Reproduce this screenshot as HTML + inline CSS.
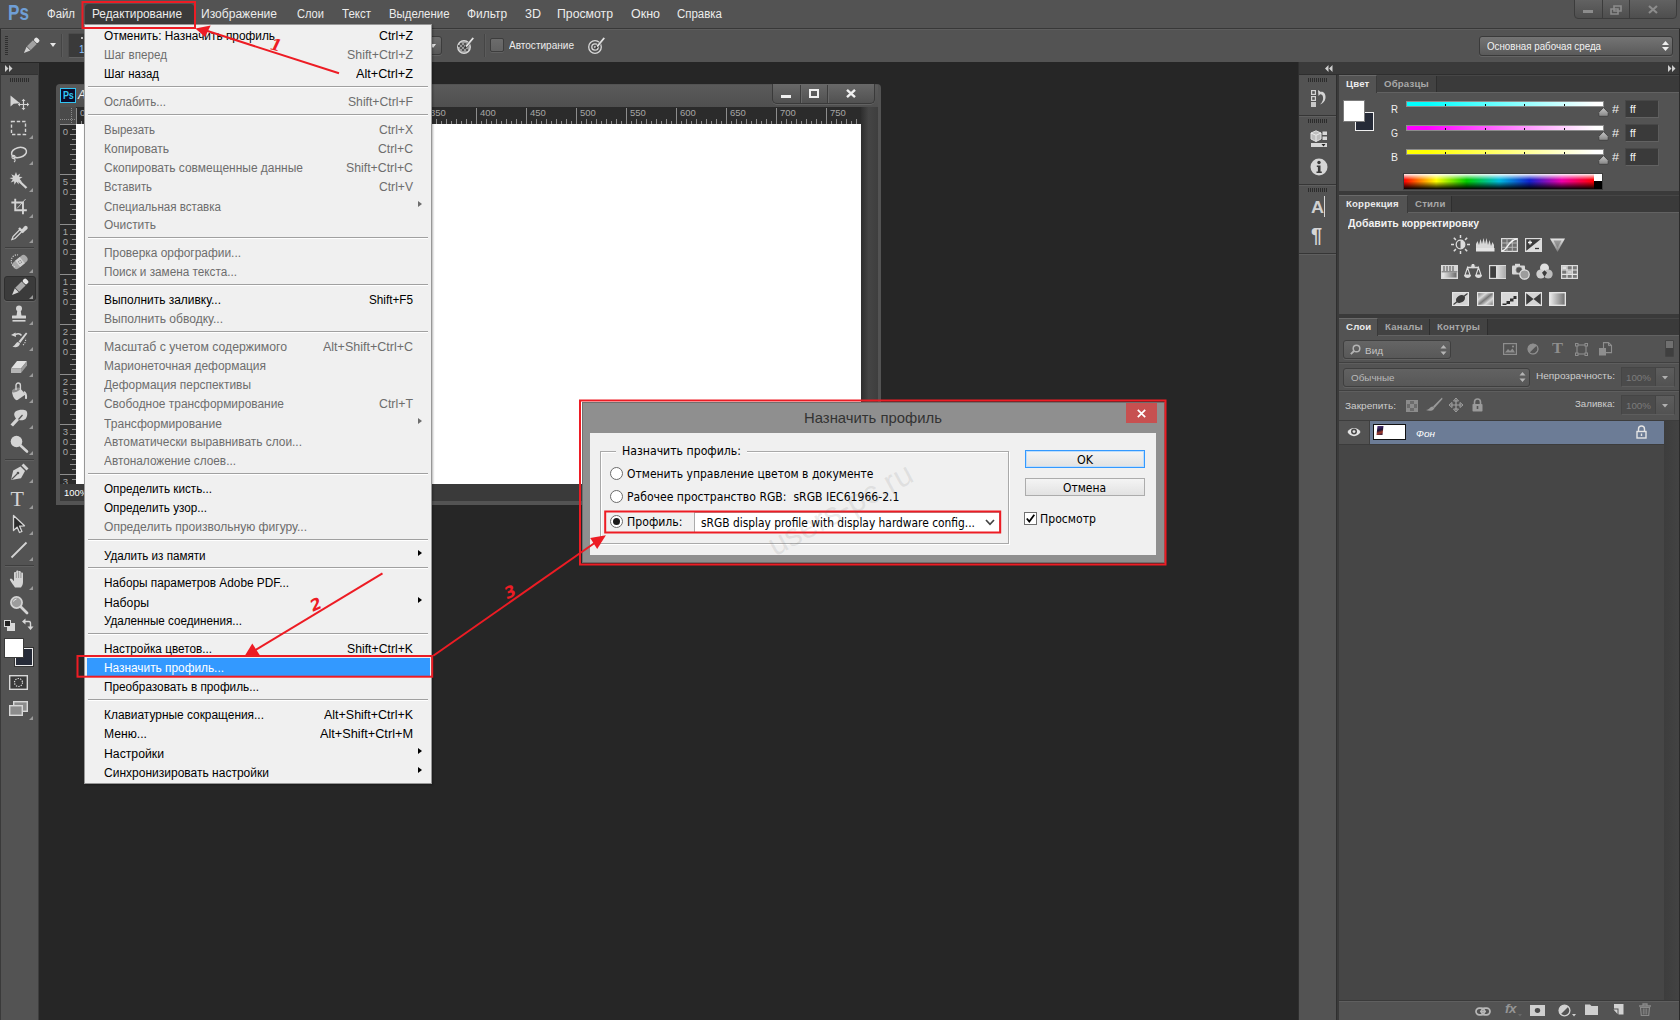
<!DOCTYPE html>
<html lang="ru"><head>
<meta charset="utf-8">
<title>Photoshop - Назначить профиль</title>
<style>
*{box-sizing:border-box;margin:0;padding:0}
html,body{width:1680px;height:1020px;overflow:hidden;background:#262626}
body{position:relative;font-family:"Liberation Sans",sans-serif;font-size:12px;color:#e6e6e6;-webkit-font-smoothing:antialiased}
.abs{position:absolute}
.t{position:absolute;white-space:nowrap;line-height:1}
svg{position:absolute;overflow:visible}
/* ===== top bars ===== */
#menubar{left:0;top:0;width:1680px;height:28px;background:#535353}
#menuline{left:0;top:28px;width:1680px;height:1px;background:#383838}
#menuline2{left:0;top:29px;width:1680px;height:1px;background:#5e5e5e}
#optbar{left:0;top:30px;width:1680px;height:32px;background:#535353}
.mb{position:absolute;top:8px;font-size:12px;line-height:12px;color:#ececec;white-space:nowrap;transform-origin:0 50%}
/* ===== toolbar ===== */
#toolbar{left:0;top:63px;width:39px;height:957px;background:#535353;border-left:1px solid #3a3a3a;border-right:1px solid #3d3d3d}
#toolhdr{left:1px;top:63px;width:37px;height:11px;background:#3a3a3a}
/* ===== doc window ===== */
#doc{left:56px;top:84px;width:825px;height:421px;background:#535353;border-radius:4px 4px 0 0}
#doctitle{left:60px;top:85px;width:818px;height:22px;background:linear-gradient(#5a5a5a,#4f4f4f)}
#hruler{left:76px;top:107px;width:785px;height:17px;background:#2b2b2b}
#vruler{left:60px;top:124px;width:16px;height:360px;background:#2b2b2b}
#rcorner{left:60px;top:107px;width:16px;height:17px;background:#4a4a4a}
#canvas{left:76px;top:124px;width:785px;height:360px;background:#fff}
#vscroll{left:861px;top:107px;width:17px;height:394px;background:linear-gradient(90deg,#2e2e2e,#454545 45%,#3e3e3e)}
#status{left:60px;top:484px;width:801px;height:17px;background:#3a3a3a}
.rl{position:absolute;font-size:9.5px;line-height:10px;color:#a6a6a6;white-space:nowrap}
/* ===== dropdown menu ===== */
#menu{left:84px;top:24px;width:348px;height:760px;background:#f0f0f0;border:1px solid #979797;box-shadow:1px 1px 2px rgba(0,0,0,.3)}
.mt{position:absolute;font-size:12px;line-height:19px;height:19px;white-space:nowrap;margin-top:1px}
.ms{position:absolute;left:88px;width:340px;height:2px;border-top:1px solid #a0a0a0;border-bottom:1px solid #fff}
.arr{position:absolute;left:418px;width:0;height:0;border-left:4.500px solid #000;border-top:3.700px solid transparent;border-bottom:3.700px solid transparent;margin-top:-1px}
/* ===== right dock ===== */
#dock{left:1298px;top:62px;width:382px;height:958px;background:#3a3a3a}
#iconcol{left:1299px;top:75px;width:37px;height:945px;background:#535353}
.panel{position:absolute;left:1339px;width:340px;background:#535353;border-top:1px solid #626262}
.tabbar{position:absolute;left:1339px;width:340px;height:17px;background:#3a3a3a;z-index:1;border-top:1px solid #464646}
.tab{position:absolute;top:0;height:16px;font-size:9.600px;letter-spacing:.2px;font-weight:bold;line-height:15px;color:#a8a8a8;border-right:1px solid #2e2e2e;background:#424242;padding-left:7px;white-space:nowrap}
.tab.a{background:#535353;color:#ececec;height:18px;top:-1px;border-right:1px solid #3a3a3a;border-top:1px solid #6a6a6a;line-height:16px}
.ps{font-size:10px;color:#dcdcdc}
/* ===== dialog ===== */
#dlg{left:582px;top:402px;width:583px;height:161px;background:#8f8f8f;border:1px solid #6f6f6f}
#dlgc{left:590px;top:433px;width:566px;height:122px;background:#f0f0f0}
.dt{position:absolute;white-space:nowrap;color:#000;font-family:"DejaVu Sans Condensed","DejaVu Sans","Liberation Sans",sans-serif;font-size:12px;line-height:14px;transform-origin:0 50%}
.radio{position:absolute;width:13px;height:13px;border-radius:50%;border:1px solid #6b6b6b;background:#fff}
.btn{position:absolute;left:1025px;width:120px;height:18px;border:1px solid #acacac;background:linear-gradient(#f4f4f4,#e2e2e2)}
</style>
</head>
<body>
<!-- ================= TOP BARS ================= -->
<div id="menubar" class="abs"></div>
<div id="menuline" class="abs"></div>
<div id="menuline2" class="abs"></div>
<div id="optbar" class="abs"></div>
<!--MENUBAR-ITEMS-->
<div class="abs" style="left:84.500px;top:4px;width:109px;height:20px;background:#3a3a3a;border-radius:3.500px 3.500px 0 0"></div>
<span class="t" style="left: 7.5px; top: 2.5px; font-size: 21.5px; font-weight: bold; color: rgb(111, 159, 214); transform: scaleX(0.7981); transform-origin: 0px 50%;">Ps</span>
<span class="mb" style="transform: scaleX(0.9487); left: 47px; transform-origin: 0px 50%;">Файл</span>
<span class="mb" style="transform: scaleX(0.9844); left: 92px; transform-origin: 0px 50%;">Редактирование</span>
<span class="mb" style="transform: scaleX(1.0054); left: 201px; transform-origin: 0px 50%;">Изображение</span>
<span class="mb" style="transform: scaleX(0.9251); left: 297px; transform-origin: 0px 50%;">Слои</span>
<span class="mb" style="transform: scaleX(0.9597); left: 342px; transform-origin: 0px 50%;">Текст</span>
<span class="mb" style="transform: scaleX(0.9514); left: 388.5px; transform-origin: 0px 50%;">Выделение</span>
<span class="mb" style="transform: scaleX(0.9922); left: 467px; transform-origin: 0px 50%;">Фильтр</span>
<span class="mb" style="transform: scaleX(1.0428); left: 525px; transform-origin: 0px 50%;">3D</span>
<span class="mb" style="transform: scaleX(1.0217); left: 557px; transform-origin: 0px 50%;">Просмотр</span>
<span class="mb" style="transform: scaleX(1.0398); left: 631px; transform-origin: 0px 50%;">Окно</span>
<span class="mb" style="transform: scaleX(0.9559); left: 677px; transform-origin: 0px 50%;">Справка</span>
<!--/MENUBAR-ITEMS-->
<!--OPTBAR-ITEMS-->
<div class="abs" style="left:0;top:29px;width:1px;height:991px;background:#2e2e2e"></div>
<!-- grip -->
<div class="abs" style="left:5px;top:36px;width:3px;height:20px;background:repeating-linear-gradient(#2f2f2f 0 1px,transparent 1px 2px)"></div>
<!-- pencil icon -->
<svg style="left:22px;top:37px" width="18" height="18" viewBox="0 0 18 18"><g transform="rotate(45 9 9)"><rect x="6.3" y="-1.2" width="5.4" height="4.2" rx="1.6" fill="#e4e4e4"></rect><rect x="6.3" y="3.6" width="5.4" height="8.4" fill="#a2a2a2"></rect><path d="M6.3 12.6h5.4L9 19z" fill="#d2d2d2"></path></g></svg>
<svg style="left:50px;top:43px" width="6" height="4" viewBox="0 0 6 4"><path d="M0 0h6L3 4z" fill="#e6e6e6"></path></svg>
<div class="abs" style="left:61px;top:34px;width:1px;height:23px;background:#454545"></div>
<div class="abs" style="left:62px;top:34px;width:1px;height:23px;background:#5b5b5b"></div>
<!-- brush preset -->
<div class="abs" style="left:68px;top:33px;width:358px;height:25px;background:#3a3a3a;border:1px solid #4b4b4b;border-bottom-color:#626262;border-radius:2px"></div>
<div class="abs" style="left:81px;top:37px;width:2px;height:2px;background:#e8e8e8;border-radius:1px"></div>
<span class="t" style="left:79px;top:45px;font-size:10px;color:#8cc4ff">13</span>
<div class="abs" style="left:425px;top:36px;width:17px;height:19px;background:linear-gradient(#6e6e6e,#585858);border:1px solid #3c3c3c;border-radius:0 3px 3px 0;box-shadow:0 1px 0 #626262"></div>
<svg style="left:430px;top:44px" width="6" height="4" viewBox="0 0 6 4"><path d="M0 0h6L3 4z" fill="#e6e6e6"></path></svg>
<!-- icon: brush with checker circle -->
<svg style="left:456px;top:35px" width="20" height="20" viewBox="0 0 20 20"><circle cx="8" cy="12" r="6.3" fill="#9a9a9a" stroke="#d8d8d8" stroke-width="1.3"></circle><path d="M4 8h2v2H4zM8 8h2v2H8zM6 10h2v2H6zM10 10h2v2h-2zM4 12h2v2H4zM8 12h2v2H8zM6 14h2v2H6zM10 14h2v2h-2zM2 10h2v2H2z" fill="#555"></path><path d="M9 11l7.5-9 1.8 1.5-7.5 9z" fill="#e0e0e0" stroke="#444" stroke-width=".6"></path><path d="M9 11l1.8 1.5-2.6 1.3z" fill="#333"></path></svg>
<div class="abs" style="left:484px;top:34px;width:1px;height:23px;background:#454545"></div>
<div class="abs" style="left:485px;top:34px;width:1px;height:23px;background:#5b5b5b"></div>
<div class="abs" style="left:490px;top:38px;width:14px;height:14px;background:linear-gradient(#6c6c6c,#626262);border:1px solid #3d3d3d;border-radius:2px;box-shadow:0 1px 0 #616161"></div>
<span class="t" style="top: 40px; font-size: 10.5px; color: rgb(236, 236, 236); transform: scaleX(0.9559); left: 509px; transform-origin: 0px 50%;">Автостирание</span>
<!-- icon: target with brush -->
<svg style="left:586px;top:35px" width="22" height="20" viewBox="0 0 22 20"><circle cx="9" cy="12" r="6.3" fill="none" stroke="#d8d8d8" stroke-width="1.3"></circle><circle cx="9" cy="12" r="3.2" fill="none" stroke="#d8d8d8" stroke-width="1.3"></circle><circle cx="9" cy="12" r="1" fill="#d8d8d8"></circle><path d="M10 11l7.5-9 1.8 1.5-7.5 9z" fill="#e0e0e0" stroke="#444" stroke-width=".6"></path><path d="M10 11l1.8 1.5-2.6 1.3z" fill="#333"></path></svg>
<!-- workspace dropdown -->
<div class="abs" style="left:1479px;top:36px;width:194px;height:20px;background:linear-gradient(#747474,#5a5a5a);border:1px solid #3a3a3a;border-radius:3px;box-shadow:0 1px 0 #646464"></div>
<span class="t" style="top: 41px; font-size: 10.5px; color: rgb(242, 242, 242); transform: scaleX(0.9286); left: 1487px; transform-origin: 0px 50%;">Основная рабочая среда</span>
<svg style="left:1662px;top:41px" width="7" height="10" viewBox="0 0 7 10"><path d="M3.5 0L7 4H0zM3.5 10L7 6H0z" fill="#eee"></path></svg>
<!-- window controls -->
<div class="abs" style="left:1574px;top:-3px;width:103px;height:22px;background:linear-gradient(#646464,#4e4e4e);border:1px solid #3c3c3c;border-radius:0 0 4px 4px"></div>
<div class="abs" style="left:1602px;top:0;width:1px;height:18px;background:#3c3c3c"></div>
<div class="abs" style="left:1629px;top:0;width:1px;height:18px;background:#3c3c3c"></div>
<div class="abs" style="left:1583px;top:10px;width:10px;height:3px;background:#8c8c8c"></div>
<svg style="left:1610px;top:5px" width="12" height="10" viewBox="0 0 12 10"><path d="M4 1h7v5h-7z M1 4h7v5h-7z" fill="none" stroke="#8c8c8c" stroke-width="1.6"></path></svg>
<svg style="left:1648px;top:5px" width="10" height="9" viewBox="0 0 10 9"><path d="M1 1l8 7M9 1l-8 7" stroke="#8c8c8c" stroke-width="2.2"></path></svg>
<!--/OPTBAR-ITEMS-->
<!-- ================= TOOLBAR ================= -->
<div id="toolbar" class="abs"></div>
<div id="toolhdr" class="abs"></div>
<!--TOOLS-->
<svg style="left:5px;top:65px" width="8" height="7" viewBox="0 0 8 7"><path d="M0 0l3.500 3.500L0 7zM4 0l3.500 3.500L4 7z" fill="#cfcfcf"></path></svg>
<div class="abs" style="left:1px;top:74px;width:37px;height:1px;background:#333"></div>
<div class="abs" style="left:10px;top:78px;width:19px;height:4px;background:repeating-linear-gradient(90deg,#2c2c2c 0 1px,transparent 1px 2px)"></div>
<div class="abs" style="left:5px;top:247px;width:29px;height:1px;background:#3e3e3e"></div><div class="abs" style="left:5px;top:248px;width:29px;height:1px;background:#5f5f5f"></div>
<div class="abs" style="left:5px;top:459px;width:29px;height:1px;background:#3e3e3e"></div><div class="abs" style="left:5px;top:460px;width:29px;height:1px;background:#5f5f5f"></div>
<div class="abs" style="left:5px;top:565px;width:29px;height:1px;background:#3e3e3e"></div><div class="abs" style="left:5px;top:566px;width:29px;height:1px;background:#5f5f5f"></div>
<div class="abs" style="left:4px;top:276px;width:32px;height:25px;background:#3b3b3b;border:1px solid #2f2f2f;border-radius:3px;box-shadow:0 1px 0 #626262"></div>
<svg style="left:9px;top:92px" width="20" height="20" viewBox="0 0 20 20"><path d="M1.500 3.500v11l3.200-2.700 6.300-.6z" fill="#d4d4d4"></path><path d="M14.500 8v9M10 12.500h9" stroke="#d4d4d4" stroke-width="1.200"></path><path d="M14.500 6.800l1.900 2.200h-3.800zM14.500 18.200l1.900-2.200h-3.800zM8.800 12.500l2.200-1.900v3.800zM20.200 12.500l-2.200-1.900v3.800z" fill="#d4d4d4"></path></svg>
<svg style="left:9px;top:118px" width="20" height="20" viewBox="0 0 20 20"><rect x="2.5" y="3.5" width="14" height="13" fill="none" stroke="#d4d4d4" stroke-width="1.4" stroke-dasharray="3.4 1.9"></rect></svg>
<svg style="left:29px;top:135px" width="4" height="4" viewBox="0 0 4 4"><path d="M4 0v4H0z" fill="#9a9a9a"></path></svg>
<svg style="left:9px;top:144px" width="20" height="20" viewBox="0 0 20 20"><ellipse cx="10" cy="8.5" rx="7.6" ry="5" fill="none" stroke="#d4d4d4" stroke-width="1.5" transform="rotate(-14 10 8.5)"></ellipse><circle cx="4.5" cy="13" r="1.6" fill="none" stroke="#d4d4d4" stroke-width="1.1"></circle><path d="M5 14.5c1.5 1 1.5 2.5 0 3.5" fill="none" stroke="#d4d4d4" stroke-width="1.1"></path></svg>
<svg style="left:29px;top:161px" width="4" height="4" viewBox="0 0 4 4"><path d="M4 0v4H0z" fill="#9a9a9a"></path></svg>
<svg style="left:9px;top:171px" width="20" height="20" viewBox="0 0 20 20"><path d="M7 1l1.2 3.4 3-2-1.2 3.3 3.6.3-3 2 2.4 2.7-3.5-.7.2 3.6-2.3-2.8-2 3-.3-3.6-3.4 1.2 2.1-2.9L.5 7l3.5-.6-1.700-3.200 3.200 1.600z" fill="#d4d4d4"></path><path d="M9.500 9.500l8 7.500" stroke="#d4d4d4" stroke-width="2.300"></path></svg>
<svg style="left:29px;top:188px" width="4" height="4" viewBox="0 0 4 4"><path d="M4 0v4H0z" fill="#9a9a9a"></path></svg>
<svg style="left:9px;top:197px" width="20" height="20" viewBox="0 0 20 20"><g transform="translate(1.500 0.800) scale(.86)"><path d="M5.500 1v13.500H19M1 5.500h13.500V19" fill="none" stroke="#d4d4d4" stroke-width="2.200"></path><path d="M7.500 12.500L17.500 1.500" stroke="#d4d4d4" stroke-width="1"></path></g></svg>
<svg style="left:29px;top:214px" width="4" height="4" viewBox="0 0 4 4"><path d="M4 0v4H0z" fill="#9a9a9a"></path></svg>
<svg style="left:9px;top:221.5px" width="20" height="20" viewBox="0 0 20 20"><path d="M3 17.500l1-3 7-7 2 2-7 7z" fill="none" stroke="#d4d4d4" stroke-width="1.300"></path><path d="M10 6l4.500 4.500" stroke="#d4d4d4" stroke-width="2.400"></path><path d="M12.300 8l3-3.500a1.900 1.900 0 012.800 2.800l-3.500 3z" fill="#d4d4d4"></path><path d="M2.500 18l1.500-.8-.7-.7z" fill="#d4d4d4"></path></svg>
<svg style="left:29px;top:238.5px" width="4" height="4" viewBox="0 0 4 4"><path d="M4 0v4H0z" fill="#9a9a9a"></path></svg>
<svg style="left:9px;top:252px" width="20" height="20" viewBox="0 0 20 20"><g transform="rotate(-40 11 10)"><rect x="2.500" y="6" width="17" height="8" rx="3.800" fill="#a9a9a9"></rect><rect x="8" y="6" width="6" height="8" fill="#cfcfcf"></rect><path d="M9.500 8.500h1v1h-1zM11.500 8.500h1v1h-1zM9.500 10.500h1v1h-1zM11.500 10.500h1v1h-1z" fill="#666"></path></g><path d="M6 15c-4-2-5-7-2-10.500 1.500-1.500 3.500-2 5-1.500" fill="none" stroke="#d4d4d4" stroke-width="1.100" stroke-dasharray="1.200 1.200"></path></svg>
<svg style="left:29px;top:269px" width="4" height="4" viewBox="0 0 4 4"><path d="M4 0v4H0z" fill="#9a9a9a"></path></svg>
<svg style="left:9px;top:278px" width="20" height="20" viewBox="0 0 20 20"><g transform="rotate(45 10 10)"><rect x="7.200" y="-1.500" width="5.600" height="4.400" rx="1.600" fill="#e6e6e6"></rect><rect x="7.200" y="3.500" width="5.600" height="9" fill="#a8a8a8"></rect><path d="M7.200 13.100h5.600L10 19.800z" fill="#d6d6d6"></path></g></svg>
<svg style="left:29px;top:295px" width="4" height="4" viewBox="0 0 4 4"><path d="M4 0v4H0z" fill="#9a9a9a"></path></svg>
<svg style="left:9px;top:304px" width="20" height="20" viewBox="0 0 20 20"><circle cx="10" cy="4.500" r="3" fill="#d4d4d4"></circle><path d="M8.300 6.500h3.400l.8 5.500h-5z" fill="#d4d4d4"></path><rect x="3" y="11.500" width="14" height="3" rx=".5" fill="#d4d4d4"></rect><rect x="3.500" y="16" width="13" height="1.600" fill="#d4d4d4"></rect></svg>
<svg style="left:29px;top:321px" width="4" height="4" viewBox="0 0 4 4"><path d="M4 0v4H0z" fill="#9a9a9a"></path></svg>
<svg style="left:9px;top:330px" width="20" height="20" viewBox="0 0 20 20"><path d="M17 2.500l-7.500 9 1.800 1.500 7-9.500z" fill="#d4d4d4"></path><path d="M9 12c-2.500.5-2.500 3.500-5.500 4.500 3 1.500 7 .500 7.500-3z" fill="#d4d4d4"></path><path d="M5 5.500c3-2.500 6-2 7.500 0" fill="none" stroke="#d4d4d4" stroke-width="1.500"></path><path d="M2 5l4.500-2.500.5 4.500z" fill="#d4d4d4"></path><path d="M14 15c2-1.500 3-4 2.500-6.500" fill="none" stroke="#d4d4d4" stroke-width="1.100" stroke-dasharray="1.200 1.200"></path></svg>
<svg style="left:29px;top:347px" width="4" height="4" viewBox="0 0 4 4"><path d="M4 0v4H0z" fill="#9a9a9a"></path></svg>
<svg style="left:9px;top:356px" width="20" height="20" viewBox="0 0 20 20"><path d="M2 12.500l6-7.500h10l-6 7.500z" fill="#e2e2e2"></path><path d="M2 12.500h10v4.500H2z" fill="#b4b4b4"></path><path d="M12 12.500l6-7.500v4.500l-6 7.500z" fill="#9a9a9a"></path></svg>
<svg style="left:29px;top:373px" width="4" height="4" viewBox="0 0 4 4"><path d="M4 0v4H0z" fill="#9a9a9a"></path></svg>
<svg style="left:9px;top:382px" width="20" height="20" viewBox="0 0 20 20"><path d="M3 9.500l8-3.500 5.500 6.500-8 5.500c-2 1-5-3-5.500-8.500z" fill="#d4d4d4"></path><ellipse cx="7" cy="8" rx="4.300" ry="1.900" transform="rotate(-23 7 8)" fill="#8a8a8a"></ellipse><path d="M7 8V3.200a2.200 2.200 0 014.400 0V7" fill="none" stroke="#d4d4d4" stroke-width="1.400"></path><path d="M15 9c2.500 1 3.500 4 3 7.500-.8 1.200-2.200.5-2-1 .3-2-.2-4-1.500-5z" fill="#d4d4d4"></path></svg>
<svg style="left:29px;top:399px" width="4" height="4" viewBox="0 0 4 4"><path d="M4 0v4H0z" fill="#9a9a9a"></path></svg>
<svg style="left:9px;top:408px" width="20" height="20" viewBox="0 0 20 20"><path d="M6.500 3.500c2.500-2 8-2.500 10.500-1 2 1.500 1.500 6.500-.5 8.500-2 1.500-4.500 1.500-6.500 1l-6 6.500-2.500-2 5.500-6c-2-2.500-2.500-5.500-.5-7z" fill="#d4d4d4"></path><path d="M9.500 11.500l4-4.500" stroke="#535353" stroke-width="1.200"></path></svg>
<svg style="left:29px;top:425px" width="4" height="4" viewBox="0 0 4 4"><path d="M4 0v4H0z" fill="#9a9a9a"></path></svg>
<svg style="left:9px;top:434px" width="20" height="20" viewBox="0 0 20 20"><circle cx="7.500" cy="7.500" r="5.800" fill="#d4d4d4"></circle><path d="M11.500 11.500l6.500 6" stroke="#d4d4d4" stroke-width="2.600" stroke-linecap="round"></path></svg>
<svg style="left:29px;top:451px" width="4" height="4" viewBox="0 0 4 4"><path d="M4 0v4H0z" fill="#9a9a9a"></path></svg>
<svg style="left:9px;top:462px" width="20" height="20" viewBox="0 0 20 20"><path d="M2 18l2.200-9.500 7.300-4 4.500 4.500-4 7.300z" fill="#d4d4d4"></path><path d="M2.500 17.500l6-6" stroke="#535353" stroke-width="1.100"></path><circle cx="9" cy="11" r="1.300" fill="#535353"></circle><path d="M12.500 3.500l2-2 5 5-2 2z" fill="#d4d4d4"></path></svg>
<svg style="left:29px;top:479px" width="4" height="4" viewBox="0 0 4 4"><path d="M4 0v4H0z" fill="#9a9a9a"></path></svg>
<span class="t" style="left:10.5px;top:488px;font-family:'Liberation Serif',serif;font-size:22px;color:#d4d4d4">T</span>
<svg style="left:29px;top:505px" width="4" height="4" viewBox="0 0 4 4"><path d="M4 0v4H0z" fill="#9a9a9a"></path></svg>
<svg style="left:9px;top:514px" width="20" height="20" viewBox="0 0 20 20"><path d="M4.500 1.500v15l3.600-3.400 2.400 5.400 2.400-1.100-2.400-5.300 5-.3z" fill="#2b2b2b" stroke="#d4d4d4" stroke-width="1.300" stroke-linejoin="round"></path></svg>
<svg style="left:29px;top:531px" width="4" height="4" viewBox="0 0 4 4"><path d="M4 0v4H0z" fill="#9a9a9a"></path></svg>
<svg style="left:9px;top:540px" width="20" height="20" viewBox="0 0 20 20"><path d="M2.500 17.500L17.500 2.500" stroke="#d4d4d4" stroke-width="1.800"></path></svg>
<svg style="left:29px;top:557px" width="4" height="4" viewBox="0 0 4 4"><path d="M4 0v4H0z" fill="#9a9a9a"></path></svg>
<svg style="left:9px;top:569px" width="20" height="20" viewBox="0 0 20 20"><path d="M6 18.500c-1.500-2-3.500-5-5-7.500-.6-1.200 1-2.200 2-1l2 2.300V4c0-1.500 2.200-1.500 2.200 0V2.500c0-1.500 2.300-1.500 2.300 0V3c0-1.500 2.300-1.500 2.300 0v1.500c0-1.400 2.200-1.400 2.200 0V13c0 2.500-1 4-2 5.500z" fill="#d4d4d4"></path><path d="M7.300 4v5M9.600 3v6M11.900 4v5" stroke="#7a7a7a" stroke-width=".7"></path></svg>
<svg style="left:29px;top:586px" width="4" height="4" viewBox="0 0 4 4"><path d="M4 0v4H0z" fill="#9a9a9a"></path></svg>
<svg style="left:9px;top:595px" width="20" height="20" viewBox="0 0 20 20"><circle cx="7.500" cy="7.500" r="5.600" fill="#9c9c9c" stroke="#d4d4d4" stroke-width="1.700"></circle><path d="M12 12l6 6" stroke="#d4d4d4" stroke-width="2.800" stroke-linecap="round"></path><path d="M4.500 6.500a3.500 3.500 0 013-2.500" stroke="#e8e8e8" stroke-width="1" fill="none"></path></svg>
<svg style="left:4px;top:620px" width="11" height="11" viewBox="0 0 11 11"><rect x="3.500" y="3.500" width="7" height="7" fill="#d8d8d8" stroke="#d8d8d8"></rect><rect x=".5" y=".5" width="6" height="6" fill="#222" stroke="#d8d8d8"></rect></svg>
<svg style="left:22px;top:618px" width="11" height="12" viewBox="0 0 11 12"><path d="M2.500 3.500h4.500c1.500 0 1.500 1 1.500 2V9" fill="none" stroke="#d8d8d8" stroke-width="1.400"></path><path d="M0 3.500L3.500.5v6zM8.500 12L5.500 8.500h6z" fill="#d8d8d8"></path></svg>
<div class="abs" style="left:15px;top:648px;width:18px;height:18px;background:#262b38;border:1px solid #ececec;outline:1px solid #333"></div>
<div class="abs" style="left:5px;top:639px;width:18px;height:18px;background:#fff;outline:1px solid #3a3a3a"></div>
<svg style="left:9px;top:675px" width="19" height="15" viewBox="0 0 19 15"><rect x=".7" y=".7" width="17.600" height="13.600" fill="#3a3a3a" stroke="#d8d8d8" stroke-width="1.400"></rect><circle cx="9.500" cy="7.500" r="4" fill="none" stroke="#e0e0e0" stroke-width="1.200" stroke-dasharray="1.300 1.200"></circle></svg>
<svg style="left:9px;top:701px" width="19" height="16" viewBox="0 0 19 16"><rect x="4.700" y=".7" width="13.600" height="9.600" fill="#8c8c8c" stroke="#d8d8d8" stroke-width="1.400"></rect><rect x=".7" y="4.700" width="12.600" height="9.600" fill="#8c8c8c" stroke="#d8d8d8" stroke-width="1.400"></rect></svg>
<svg style="left:29px;top:716px" width="4" height="4" viewBox="0 0 4 4"><path d="M4 0v4H0z" fill="#9a9a9a"></path></svg>
<!--/TOOLS-->
<!-- ================= DOC WINDOW ================= -->
<div id="doc" class="abs"></div>
<div id="doctitle" class="abs"></div>
<div id="hruler" class="abs"></div>
<div id="vruler" class="abs"></div>
<div id="rcorner" class="abs"></div>
<div id="canvas" class="abs"></div>
<div id="vscroll" class="abs"></div>
<div id="status" class="abs"></div>
<!--DOC-ITEMS-->
<div class="abs" style="left:60px;top:88px;width:16px;height:15px;background:#0b0b2a;border:1px solid #31c5f4"></div>
<span class="t" style="top: 90px; font-size: 10.5px; font-weight: bold; color: rgb(49, 197, 244); letter-spacing: -0.3px; transform: scaleX(0.8571); left: 63px; transform-origin: 0px 50%;">Ps</span>
<span class="t" style="left:78px;top:89px;font-size:12px;color:#f0f0f0;font-style:italic">Adobe</span>
<div class="abs" style="left:772px;top:84px;width:103px;height:20px;background:linear-gradient(#686868,#515151);border:1px solid #3a3a3a;border-top:none;border-radius:0 0 5px 5px;box-shadow:0 1px 0 #626262"></div>
<div class="abs" style="left:800px;top:85px;width:1px;height:18px;background:#3d3d3d"></div><div class="abs" style="left:801px;top:85px;width:1px;height:18px;background:#686868"></div>
<div class="abs" style="left:827px;top:85px;width:1px;height:18px;background:#3d3d3d"></div><div class="abs" style="left:828px;top:85px;width:1px;height:18px;background:#686868"></div>
<div class="abs" style="left:781px;top:95px;width:10px;height:3px;background:#f0f0f0"></div>
<div class="abs" style="left:809px;top:89px;width:10px;height:9px;border:2px solid #f0f0f0;border-top-width:2px"></div>
<svg style="left:846px;top:89px" width="10" height="9" viewBox="0 0 10 9"><path d="M1 .8l8 7.400M9 .8l-8 7.400" stroke="#f0f0f0" stroke-width="2.400"></path></svg>
<div class="abs" style="left:76px;top:121px;width:785px;height:3px;background:repeating-linear-gradient(90deg,#8d8d8d 0 1px,transparent 1px 5px)"></div>
<div class="abs" style="left:76px;top:119px;width:785px;height:5px;background:repeating-linear-gradient(90deg,#8d8d8d 0 1px,transparent 1px 10px)"></div>
<div class="abs" style="left:76px;top:108px;width:785px;height:16px;background:repeating-linear-gradient(90deg,#8d8d8d 0 1px,transparent 1px 50px)"></div>
<span class="rl" style="left:80px;top:108px">0</span>
<span class="rl" style="left:130px;top:108px">50</span>
<span class="rl" style="left:180px;top:108px">100</span>
<span class="rl" style="left:230px;top:108px">150</span>
<span class="rl" style="left:280px;top:108px">200</span>
<span class="rl" style="left:330px;top:108px">250</span>
<span class="rl" style="left:380px;top:108px">300</span>
<span class="rl" style="left:430px;top:108px">350</span>
<span class="rl" style="left:480px;top:108px">400</span>
<span class="rl" style="left:530px;top:108px">450</span>
<span class="rl" style="left:580px;top:108px">500</span>
<span class="rl" style="left:630px;top:108px">550</span>
<span class="rl" style="left:680px;top:108px">600</span>
<span class="rl" style="left:730px;top:108px">650</span>
<span class="rl" style="left:780px;top:108px">700</span>
<span class="rl" style="left:830px;top:108px">750</span>
<div class="abs" style="left:72px;top:124px;width:4px;height:360px;background:repeating-linear-gradient(#8d8d8d 0 1px,transparent 1px 5px)"></div>
<div class="abs" style="left:70px;top:124px;width:6px;height:360px;background:repeating-linear-gradient(#8d8d8d 0 1px,transparent 1px 10px)"></div>
<div class="abs" style="left:60px;top:124px;width:16px;height:360px;background:repeating-linear-gradient(#8d8d8d 0 1px,transparent 1px 50px)"></div>
<span class="rl" style="left:62px;top:127px;line-height:10px;width:7px;text-align:center;white-space:normal;overflow:hidden;height:40px">0</span>
<span class="rl" style="left:62px;top:177px;line-height:10px;width:7px;text-align:center;white-space:normal;overflow:hidden;height:40px">5<br>0</span>
<span class="rl" style="left:62px;top:227px;line-height:10px;width:7px;text-align:center;white-space:normal;overflow:hidden;height:40px">1<br>0<br>0</span>
<span class="rl" style="left:62px;top:277px;line-height:10px;width:7px;text-align:center;white-space:normal;overflow:hidden;height:40px">1<br>5<br>0</span>
<span class="rl" style="left:62px;top:327px;line-height:10px;width:7px;text-align:center;white-space:normal;overflow:hidden;height:40px">2<br>0<br>0</span>
<span class="rl" style="left:62px;top:377px;line-height:10px;width:7px;text-align:center;white-space:normal;overflow:hidden;height:40px">2<br>5<br>0</span>
<span class="rl" style="left:62px;top:427px;line-height:10px;width:7px;text-align:center;white-space:normal;overflow:hidden;height:40px">3<br>0<br>0</span>
<span class="rl" style="left:62px;top:477px;line-height:10px;width:7px;text-align:center;white-space:normal;overflow:hidden;height:7px">3<br>5<br>0</span>
<div class="abs" style="left:60px;top:119px;width:16px;height:1px;background:repeating-linear-gradient(90deg,#8a8a8a 0 1px,transparent 1px 2px)"></div>
<div class="abs" style="left:71px;top:108px;width:1px;height:16px;background:repeating-linear-gradient(#8a8a8a 0 1px,transparent 1px 2px)"></div>
<span class="t" style="left: 64px; top: 488px; font-size: 9.5px; color: rgb(255, 255, 255); transform: scaleX(0.9871); transform-origin: 0px 50%;">100%</span>
<!--/DOC-ITEMS-->
<!-- ================= RIGHT DOCK ================= -->
<div id="dock" class="abs"></div>
<div id="iconcol" class="abs"></div>
<!--DOCK-ITEMS-->
<div class="abs" style="left:1298px;top:62px;width:1px;height:958px;background:#2f2f2f"></div>
<div class="abs" style="left:1299px;top:74px;width:381px;height:1px;background:#2e2e2e"></div>
<svg style="left:1325px;top:65px" width="8" height="7" viewBox="0 0 8 7"><path d="M3.500 0L0 3.500 3.500 7zM7.500 0L4 3.500 7.500 7z" fill="#cfcfcf"></path></svg>
<svg style="left:1668px;top:65px" width="8" height="7" viewBox="0 0 8 7"><path d="M0 0l3.500 3.500L0 7zM4 0l3.500 3.500L4 7z" fill="#cfcfcf"></path></svg>
<!-- icon column groups -->
<div class="abs" style="left:1308px;top:78px;width:19px;height:4px;background:repeating-linear-gradient(90deg,#2c2c2c 0 1px,transparent 1px 2px)"></div>
<svg style="left:1310px;top:89px" width="18" height="19" viewBox="0 0 18 19"><rect x="1.600" y="1.600" width="3.800" height="3.800" fill="none" stroke="#d4d4d4" stroke-width="1.200"></rect><rect x="1.600" y="7.600" width="3.800" height="3.800" fill="none" stroke="#d4d4d4" stroke-width="1.200"></rect><rect x="1" y="13" width="5" height="5" fill="#c8c8c8"></rect><path d="M9 3.500c4-2 7 1 6.500 5.500-.3 3-2.500 5.500-5.500 6.500 2.500-2.500 3.500-5 3-7.500-.3-2-1.800-3-3.500-2.500z" fill="#d4d4d4"></path><path d="M8 1l3.500 2.500L8.500 7z" fill="#d4d4d4"></path></svg>
<div class="abs" style="left:1299px;top:115px;width:37px;height:1px;background:#363636"></div>
<div class="abs" style="left:1299px;top:116px;width:37px;height:1px;background:#5f5f5f"></div>
<div class="abs" style="left:1308px;top:119px;width:19px;height:4px;background:repeating-linear-gradient(90deg,#2c2c2c 0 1px,transparent 1px 2px)"></div>
<svg style="left:1310px;top:130px" width="18" height="18" viewBox="0 0 18 18"><path d="M6 .8l5 2.200v6L6 11.500 1 9V3z" fill="#bdbdbd" stroke="#e2e2e2" stroke-width="1"></path><path d="M1 3l5 2.300 5-2.300M6 5.300v6" fill="none" stroke="#f0f0f0" stroke-width=".9"></path><rect x="12.500" y="1.500" width="4.500" height="3.500" fill="#d8d8d8"></rect><rect x="12.500" y="6.500" width="4.500" height="3.500" fill="#d8d8d8"></rect><rect x="1" y="13" width="16" height="4" fill="#d8d8d8"></rect><path d="M11.500 14l4 0-2 2.400z" fill="#222"></path></svg>
<svg style="left:1310px;top:158px" width="18" height="18" viewBox="0 0 18 18"><circle cx="9" cy="9" r="8.500" fill="#d6d6d6"></circle><circle cx="9" cy="4.500" r="1.700" fill="#3a3a3a"></circle><path d="M6.800 7.500h3.700v6h1.300v1.600H6.500v-1.600h1.400V9H6.800z" fill="#3a3a3a"></path></svg>
<div class="abs" style="left:1299px;top:184px;width:37px;height:1px;background:#363636"></div>
<div class="abs" style="left:1299px;top:185px;width:37px;height:1px;background:#5f5f5f"></div>
<div class="abs" style="left:1308px;top:188px;width:19px;height:4px;background:repeating-linear-gradient(90deg,#2c2c2c 0 1px,transparent 1px 2px)"></div>
<span class="t" style="left: 1310.5px; top: 199px; font-size: 17px; font-weight: bold; color: rgb(208, 208, 208); transform: scaleX(1.0585); transform-origin: 0px 50%;">A</span>
<div class="abs" style="left:1324px;top:196px;width:1px;height:21px;background:#d6d6d6"></div>
<span class="t" style="left:1311px;top:225px;font-size:20px;font-weight:bold;color:#d6d6d6">¶</span>
<div class="abs" style="left:1299px;top:253px;width:37px;height:1px;background:#363636"></div>
<div class="abs" style="left:1299px;top:254px;width:37px;height:1px;background:#5f5f5f"></div>
<div class="abs" style="left:1336px;top:75px;width:1px;height:945px;background:#2f2f2f"></div>
<!-- ===== COLOR PANEL ===== -->
<div class="tabbar" style="top:75px"><div class="tab a" style="left:0;width:38px">Цвет</div><div class="tab" style="left:38px;width:60px">Образцы</div></div>
<div class="panel" style="top:92px;height:99px"></div>
<svg style="left:1661px;top:80px" width="15" height="8" viewBox="0 0 15 8"><path d="M0 1.500h5L2.500 4.500z" fill="#c8c8c8"></path><path d="M6.500 .5H15M6.500 2.800H15M6.500 5.100H15M6.500 7.400H15" stroke="#c8c8c8" stroke-width="1.100"></path></svg>
<div class="abs" style="left:1355px;top:112px;width:19px;height:19px;background:#262b38;border:1px solid #f0f0f0"></div>
<div class="abs" style="left:1343px;top:100px;width:22px;height:22px;background:#fff;border:1px solid #7c7c7c"></div>
<span class="t" style="left: 1391px; top: 104px; font-size: 10.5px; color: rgb(240, 240, 240); transform: scaleX(0.9218); transform-origin: 0px 50%;">R</span>
<div class="abs" style="left:1406px;top:101px;width:198px;height:6px;background:#8d8d8d"></div>
<div class="abs" style="left:1407px;top:102px;width:196px;height:4px;background:linear-gradient(90deg,#00ffff 0,#00ffff 10%,#fff 96%)"></div>
<div class="abs" style="left:1445.0px;top:104px;width:1px;height:2px;background:#111"></div>
<div class="abs" style="left:1484.5px;top:104px;width:1px;height:2px;background:#111"></div>
<div class="abs" style="left:1524.0px;top:104px;width:1px;height:2px;background:#111"></div>
<div class="abs" style="left:1563.5px;top:104px;width:1px;height:2px;background:#111"></div>
<svg style="left:1598px;top:107px" width="11" height="10" viewBox="0 0 11 10"><defs><linearGradient id="thR" x1="0" y1="0" x2="0" y2="1"><stop offset="0" stop-color="#c8c8c8"></stop><stop offset="1" stop-color="#858585"></stop></linearGradient></defs><path d="M5.500 .6l4.700 4.700v3a1 1 0 01-1 1h-7.400a1 1 0 01-1-1v-3z" fill="url(#thR)" stroke="#404040" stroke-width=".9"></path></svg>
<span class="t" style="left: 1612px; top: 104px; font-size: 10.5px; color: rgb(240, 240, 240); transform: scaleX(1.1979); transform-origin: 0px 50%;">#</span>
<div class="abs" style="left:1625px;top:100px;width:34px;height:18px;background:#3a3a3a;border:1px solid #474747;border-bottom-color:#626262;border-right-color:#5c5c5c"></div>
<span class="t" style="left:1630px;top:104px;font-size:10.500px;color:#f4f4f4">ff</span>
<span class="t" style="left: 1391px; top: 128px; font-size: 10.5px; color: rgb(240, 240, 240); transform: scaleX(0.8566); transform-origin: 0px 50%;">G</span>
<div class="abs" style="left:1406px;top:125px;width:198px;height:6px;background:#8d8d8d"></div>
<div class="abs" style="left:1407px;top:126px;width:196px;height:4px;background:linear-gradient(90deg,#ff00ff 0,#ff00ff 10%,#fff 96%)"></div>
<div class="abs" style="left:1445.0px;top:128px;width:1px;height:2px;background:#111"></div>
<div class="abs" style="left:1484.5px;top:128px;width:1px;height:2px;background:#111"></div>
<div class="abs" style="left:1524.0px;top:128px;width:1px;height:2px;background:#111"></div>
<div class="abs" style="left:1563.5px;top:128px;width:1px;height:2px;background:#111"></div>
<svg style="left:1598px;top:131px" width="11" height="10" viewBox="0 0 11 10"><defs><linearGradient id="thG" x1="0" y1="0" x2="0" y2="1"><stop offset="0" stop-color="#c8c8c8"></stop><stop offset="1" stop-color="#858585"></stop></linearGradient></defs><path d="M5.500 .6l4.700 4.700v3a1 1 0 01-1 1h-7.400a1 1 0 01-1-1v-3z" fill="url(#thG)" stroke="#404040" stroke-width=".9"></path></svg>
<span class="t" style="left: 1612px; top: 128px; font-size: 10.5px; color: rgb(240, 240, 240); transform: scaleX(1.1979); transform-origin: 0px 50%;">#</span>
<div class="abs" style="left:1625px;top:124px;width:34px;height:18px;background:#3a3a3a;border:1px solid #474747;border-bottom-color:#626262;border-right-color:#5c5c5c"></div>
<span class="t" style="left:1630px;top:128px;font-size:10.500px;color:#f4f4f4">ff</span>
<span class="t" style="left: 1391px; top: 152px; font-size: 10.5px; color: rgb(240, 240, 240); transform: scaleX(0.9978); transform-origin: 0px 50%;">B</span>
<div class="abs" style="left:1406px;top:149px;width:198px;height:6px;background:#8d8d8d"></div>
<div class="abs" style="left:1407px;top:150px;width:196px;height:4px;background:linear-gradient(90deg,#ffff00 0,#ffff00 10%,#fff 96%)"></div>
<div class="abs" style="left:1445.0px;top:152px;width:1px;height:2px;background:#111"></div>
<div class="abs" style="left:1484.5px;top:152px;width:1px;height:2px;background:#111"></div>
<div class="abs" style="left:1524.0px;top:152px;width:1px;height:2px;background:#111"></div>
<div class="abs" style="left:1563.5px;top:152px;width:1px;height:2px;background:#111"></div>
<svg style="left:1598px;top:155px" width="11" height="10" viewBox="0 0 11 10"><defs><linearGradient id="thB" x1="0" y1="0" x2="0" y2="1"><stop offset="0" stop-color="#c8c8c8"></stop><stop offset="1" stop-color="#858585"></stop></linearGradient></defs><path d="M5.500 .6l4.700 4.700v3a1 1 0 01-1 1h-7.400a1 1 0 01-1-1v-3z" fill="url(#thB)" stroke="#404040" stroke-width=".9"></path></svg>
<span class="t" style="left: 1612px; top: 152px; font-size: 10.5px; color: rgb(240, 240, 240); transform: scaleX(1.1979); transform-origin: 0px 50%;">#</span>
<div class="abs" style="left:1625px;top:148px;width:34px;height:18px;background:#3a3a3a;border:1px solid #474747;border-bottom-color:#626262;border-right-color:#5c5c5c"></div>
<span class="t" style="left:1630px;top:152px;font-size:10.500px;color:#f4f4f4">ff</span>
<div class="abs" style="left:1403px;top:173px;width:200px;height:17px;background:#3c3c3c"></div>
<div class="abs" style="left:1404px;top:174px;width:190px;height:15px;background:linear-gradient(rgba(255,255,255,.95) 0,rgba(255,255,255,0) 38%,rgba(0,0,0,0) 50%,rgba(0,0,0,.97) 100%),linear-gradient(90deg,#f00 0,#ff0 17%,#0c0 33%,#0bd 50%,#12c 66%,#e0a 83%,#f00 100%)"></div>
<div class="abs" style="left:1594px;top:174px;width:8px;height:7px;background:#fff"></div><div class="abs" style="left:1594px;top:181px;width:8px;height:8px;background:#000"></div>
<!-- ===== ADJUSTMENTS PANEL ===== -->
<div class="tabbar" style="top:195px"><div class="tab a" style="left:0;width:69px">Коррекция</div><div class="tab" style="left:69px;width:44px">Стили</div></div>
<div class="panel" style="top:212px;height:102px"></div>
<svg style="left:1661px;top:200px" width="15" height="8" viewBox="0 0 15 8"><path d="M0 1.500h5L2.500 4.500z" fill="#c8c8c8"></path><path d="M6.500 .5H15M6.500 2.800H15M6.500 5.100H15M6.500 7.400H15" stroke="#c8c8c8" stroke-width="1.100"></path></svg>
<span class="t" style="top: 219px; font-size: 10px; font-weight: bold; color: rgb(242, 242, 242); transform: scaleX(1.0484); left: 1348px; transform-origin: 0px 50%;">Добавить корректировку</span>
<!-- row 1 -->
<svg style="left:1451px;top:235px" width="19" height="19" viewBox="0 0 19 19"><circle cx="9.500" cy="9.500" r="4.300" fill="#535353" stroke="#dcdcdc" stroke-width="1.300"></circle><path d="M9.500 5.200a4.300 4.300 0 010 8.600z" fill="#dcdcdc"></path><path d="M9.500 0v3M9.500 16v3M0 9.500h3M16 9.500h3M2.800 2.800l2.100 2.100M14.100 14.100l2.100 2.100M2.800 16.200l2.100-2.100M14.100 4.900l2.100-2.100" stroke="#dcdcdc" stroke-width="1.500"></path></svg>
<svg style="left:1476px;top:237px" width="19" height="15" viewBox="0 0 19 15"><path d="M0 14V7l1.500-3 1.500 4 1.500-6 1.500 5L7.500 1 9 7l1.500-6L12 8l1.500-5L15 9l1.500-4 1.500 3v6z" fill="#d8d8d8"></path><rect x="0" y="11" width="18.500" height="3.500" fill="#e4e4e4"></rect></svg>
<svg style="left:1501px;top:238px" width="17" height="14" viewBox="0 0 17 14"><rect x=".6" y=".6" width="15.800" height="12.800" fill="#6e6e6e" stroke="#dcdcdc" stroke-width="1.200"></rect><path d="M.6 5h15.800M.6 9.300h15.800M6 .6v12.800M11.300 .6v12.800" stroke="#bcbcbc" stroke-width=".9"></path><path d="M1 13c6-1 6-11 15-12" fill="none" stroke="#f4f4f4" stroke-width="1.400"></path></svg>
<svg style="left:1525px;top:238px" width="17" height="14" viewBox="0 0 17 14"><rect x=".6" y=".6" width="15.800" height="12.800" fill="#3c3c3c" stroke="#dcdcdc" stroke-width="1.200"></rect><path d="M1 13L16 1v12z" fill="#dcdcdc"></path><path d="M3 4.500h4M5 2.500v4" stroke="#f4f4f4" stroke-width="1.300"></path><path d="M10 10.500h4" stroke="#333" stroke-width="1.300"></path></svg>
<svg style="left:1550px;top:238px" width="15" height="14" viewBox="0 0 15 14"><defs><linearGradient id="gv" x1="0" y1="0" x2="0" y2="1"><stop offset="0" stop-color="#e8e8e8"></stop><stop offset="1" stop-color="#7a7a7a"></stop></linearGradient></defs><path d="M0 .5h15L7.500 14z" fill="url(#gv)"></path><path d="M3.500 2.500h8L7.500 10z" fill="#6a6a6a" opacity=".55"></path></svg>
<!-- row 2 -->
<svg style="left:1441px;top:265px" width="17" height="14" viewBox="0 0 17 14"><defs><linearGradient id="gh" x1="0" y1="0" x2="1" y2="0"><stop offset="0" stop-color="#ececec"></stop><stop offset="1" stop-color="#6c6c6c"></stop></linearGradient></defs><rect x=".6" y=".6" width="15.800" height="12.800" fill="#d6d6d6" stroke="#dcdcdc" stroke-width="1.200"></rect><path d="M3 1v5M6 1v5M9 1v5M12 1v5" stroke="#777" stroke-width="1.400"></path><rect x="1.500" y="7.500" width="14" height="5" fill="url(#gh)"></rect><path d="M.6 6.800h15.800" stroke="#555" stroke-width=".8"></path></svg>
<svg style="left:1464px;top:264px" width="18" height="15" viewBox="0 0 18 15"><path d="M9 0v3" stroke="#dcdcdc" stroke-width="2.500"></path><path d="M3.500 3.500h11" stroke="#dcdcdc" stroke-width="1.600"></path><path d="M3.500 3.500L1 11h5zM14.500 3.500L12 11h5z" fill="none" stroke="#dcdcdc" stroke-width="1.100"></path><path d="M0 11h7c0 4-7 4-7 0zM11 11h7c0 4-7 4-7 0z" fill="#dcdcdc"></path><path d="M6.500 1.500h5l-2.500 3z" fill="#dcdcdc"></path></svg>
<svg style="left:1489px;top:265px" width="17" height="14" viewBox="0 0 17 14"><rect x=".6" y=".6" width="15.800" height="12.800" fill="#3f3f3f" stroke="#dcdcdc" stroke-width="1.200"></rect><rect x="7" y="1" width="9.500" height="12" fill="url(#gh)"></rect><rect x="7" y="1" width="9.500" height="12" fill="#d8d8d8" opacity=".6"></rect></svg>
<svg style="left:1511px;top:263px" width="20" height="18" viewBox="0 0 20 18"><rect x="1" y="2.500" width="13" height="9" rx="1" fill="#d6d6d6"></rect><rect x="4" y=".8" width="5" height="3" fill="#d6d6d6"></rect><circle cx="8" cy="7" r="3" fill="#535353" stroke="#888" stroke-width=".8"></circle><circle cx="13.500" cy="11.500" r="4.700" fill="#9c9c9c" stroke="#e4e4e4" stroke-width="1.200"></circle></svg>
<svg style="left:1536px;top:263px" width="17" height="17" viewBox="0 0 17 17"><circle cx="8.500" cy="5" r="4.500" fill="#e2e2e2"></circle><circle cx="4.800" cy="11" r="4.500" fill="#cfcfcf"></circle><circle cx="12.200" cy="11" r="4.500" fill="#bdbdbd"></circle><path d="M8.500 7.300l2.500 2.500-2.500 4-2.500-4z" fill="#3c3c3c"></path></svg>
<svg style="left:1561px;top:265px" width="17" height="14" viewBox="0 0 17 14"><rect x=".6" y=".6" width="15.800" height="12.800" fill="#777" stroke="#dcdcdc" stroke-width="1.200"></rect><path d="M.6 5h15.800M.6 9.300h15.800M6 .6v12.800M11.300 .6v12.800" stroke="#e4e4e4" stroke-width="1.200"></path><rect x="1.200" y="1.200" width="4.200" height="3.200" fill="#e0e0e0"></rect><rect x="6.600" y="5.600" width="4.200" height="3.200" fill="#d0d0d0"></rect></svg>
<!-- row 3 -->
<svg style="left:1452px;top:292px" width="17" height="14" viewBox="0 0 17 14"><rect x=".6" y=".6" width="15.800" height="12.800" fill="#d2d2d2" stroke="#e4e4e4" stroke-width="1.200"></rect><ellipse cx="8.500" cy="7" rx="4.800" ry="3.600" fill="#3c3c3c" transform="rotate(-30 8.500 7)"></ellipse><path d="M1.500 12.500L15.500 1.500" stroke="#3c3c3c" stroke-width="1.100"></path></svg>
<svg style="left:1477px;top:292px" width="17" height="14" viewBox="0 0 17 14"><defs><linearGradient id="gd" x1="0" y1="0" x2="1" y2="1"><stop offset="0" stop-color="#6a6a6a"></stop><stop offset=".3" stop-color="#d8d8d8"></stop><stop offset=".5" stop-color="#777"></stop><stop offset=".7" stop-color="#d8d8d8"></stop><stop offset="1" stop-color="#6a6a6a"></stop></linearGradient></defs><rect x=".6" y=".6" width="15.800" height="12.800" fill="url(#gd)" stroke="#e4e4e4" stroke-width="1.200"></rect></svg>
<svg style="left:1501px;top:292px" width="17" height="14" viewBox="0 0 17 14"><rect x=".6" y=".6" width="15.800" height="12.800" fill="#d8d8d8" stroke="#e4e4e4" stroke-width="1.200"></rect><path d="M1.500 11.500h4V9h3.500V6.500h3.500V4h3v3h-3v2.500H9V12H5.500v1h-4z" fill="#2e2e2e"></path></svg>
<svg style="left:1525px;top:292px" width="17" height="14" viewBox="0 0 17 14"><rect x=".6" y=".6" width="15.800" height="12.800" fill="#d4d4d4" stroke="#e4e4e4" stroke-width="1.200"></rect><path d="M1.200 1.200L8.500 7l-7.300 5.800zM15.800 1.200L8.500 7l7.300 5.800z" fill="#3c3c3c"></path></svg>
<svg style="left:1549px;top:292px" width="17" height="14" viewBox="0 0 17 14"><rect x=".6" y=".6" width="15.800" height="12.800" fill="url(#gh)" stroke="#e4e4e4" stroke-width="1.200"></rect><rect x=".6" y=".6" width="15.800" height="12.800" fill="none" stroke="#e4e4e4" stroke-width="1.200"></rect></svg>
<!-- ===== LAYERS PANEL ===== -->
<div class="tabbar" style="top:318px"><div class="tab a" style="left:0;width:39px">Слои</div><div class="tab" style="left:39px;width:52px">Каналы</div><div class="tab" style="left:91px;width:58px">Контуры</div></div>
<div class="panel" style="top:335px;height:86px"></div>
<svg style="left:1661px;top:323px" width="15" height="8" viewBox="0 0 15 8"><path d="M0 1.500h5L2.500 4.500z" fill="#c8c8c8"></path><path d="M6.500 .5H15M6.500 2.800H15M6.500 5.100H15M6.500 7.400H15" stroke="#c8c8c8" stroke-width="1.100"></path></svg>
<!-- filter row -->
<div class="abs" style="left:1343px;top:340px;width:108px;height:19px;background:linear-gradient(#656565,#585858);border:1px solid #3f3f3f;border-radius:3px;box-shadow:0 1px 0 #626262"></div>
<svg style="left:1350px;top:344px" width="11" height="11" viewBox="0 0 11 11"><circle cx="6.500" cy="4.500" r="3.300" fill="none" stroke="#b4b4b4" stroke-width="1.500"></circle><path d="M4 7L.8 10.200" stroke="#b4b4b4" stroke-width="1.800"></path></svg>
<span class="t" style="top: 345.5px; font-size: 9.8px; color: rgb(196, 196, 196); transform: scaleX(1.015); left: 1365px; transform-origin: 0px 50%;">Вид</span>
<svg style="left:1440px;top:345px" width="7" height="10" viewBox="0 0 7 10"><path d="M3.500 0L6.500 3.500H.5zM3.500 10L6.500 6.500H.5z" fill="#b4b4b4"></path></svg>
<svg style="left:1503px;top:343px" width="14" height="12" viewBox="0 0 14 12"><rect x=".6" y=".6" width="12.800" height="10.800" fill="none" stroke="#8e8e8e" stroke-width="1.200"></rect><path d="M2 9.500l3-3.500 2 2 2.500-2.500 2.500 4z" fill="#8e8e8e"></path><circle cx="10" cy="3.500" r="1.100" fill="#8e8e8e"></circle></svg>
<svg style="left:1527px;top:343px" width="12" height="12" viewBox="0 0 12 12"><circle cx="6" cy="6" r="5.300" fill="#8e8e8e"></circle><path d="M2.500 9.800a5.300 5.300 0 007.300-7.300z" fill="#535353"></path><circle cx="6" cy="6" r="5" fill="none" stroke="#8e8e8e" stroke-width="1.100"></circle></svg>
<span class="t" style="left: 1551.5px; top: 341px; font-family: &quot;Liberation Serif&quot;, serif; font-size: 15px; font-weight: bold; color: rgb(142, 142, 142); transform: scaleX(1.0983); transform-origin: 0px 50%;">T</span>
<svg style="left:1575px;top:343px" width="13" height="13" viewBox="0 0 13 13"><rect x="2" y="2" width="9" height="9" fill="none" stroke="#8e8e8e" stroke-width="1.100"></rect><path d="M0 0h3.500v3.500H0zM9.500 0H13v3.500H9.500zM0 9.500h3.500V13H0zM9.500 9.500H13V13H9.500z" fill="#8e8e8e"></path><path d="M1 1h1.500v1.500H1zM10.500 1H12v1.500h-1.500zM1 10.500h1.500V12H1zM10.500 10.500H12V12h-1.500z" fill="#535353"></path></svg>
<svg style="left:1599px;top:342px" width="13" height="14" viewBox="0 0 13 14"><path d="M4.500 .6h5l3 3v7h-8z" fill="none" stroke="#8e8e8e" stroke-width="1.100"></path><path d="M9.500 .6v3h3" fill="none" stroke="#8e8e8e" stroke-width="1"></path><rect x="0" y="6" width="7" height="7.500" fill="#8e8e8e"></rect></svg>
<div class="abs" style="left:1665px;top:340px;width:9px;height:17px;background:#3f3f3f;border:1px solid #444;border-radius:1px"></div>
<div class="abs" style="left:1666px;top:341px;width:7px;height:7px;background:#707070"></div>
<div class="abs" style="left:1339px;top:362px;width:340px;height:1px;background:#404040"></div>
<div class="abs" style="left:1339px;top:363px;width:340px;height:1px;background:#5e5e5e"></div>
<!-- blend row -->
<div class="abs" style="left:1343px;top:368px;width:187px;height:19px;background:linear-gradient(#626262,#575757);border:1px solid #3f3f3f;border-radius:3px;box-shadow:0 1px 0 #626262"></div>
<span class="t" style="top: 373px; font-size: 9.8px; color: rgb(185, 185, 185); transform: scaleX(1.0051); left: 1351px; transform-origin: 0px 50%;">Обычные</span>
<svg style="left:1519px;top:372px" width="7" height="10" viewBox="0 0 7 10"><path d="M3.500 0L6.500 3.500H.5zM3.500 10L6.500 6.500H.5z" fill="#b4b4b4"></path></svg>
<span class="t" style="top: 372px; font-size: 9px; color: rgb(205, 205, 205); transform: scaleX(1.1171); left: 1536px; transform-origin: 0px 50%;">Непрозрачность:</span>
<div class="abs" style="left:1621px;top:367px;width:54px;height:20px;background:#4b4b4b;border:1px solid #454545;border-bottom-color:#5d5d5d"></div>
<div class="abs" style="left:1655px;top:368px;width:19px;height:18px;background:linear-gradient(#5d5d5d,#525252);border-left:1px solid #444"></div>
<span class="t" style="top: 372.5px; font-size: 9.5px; color: rgb(124, 124, 124); transform: scaleX(1.0283); left: 1626px; transform-origin: 0px 50%;">100%</span>
<svg style="left:1662px;top:376px" width="6" height="4" viewBox="0 0 6 4"><path d="M0 0h6L3 3.500z" fill="#b0b0b0"></path></svg>
<div class="abs" style="left:1339px;top:390px;width:340px;height:1px;background:#404040"></div>
<div class="abs" style="left:1339px;top:391px;width:340px;height:1px;background:#5e5e5e"></div>
<!-- lock row -->
<span class="t" style="top: 401.5px; font-size: 9px; color: rgb(205, 205, 205); transform: scaleX(1.1182); left: 1345px; transform-origin: 0px 50%;">Закрепить:</span>
<svg style="left:1406px;top:400px" width="12" height="12" viewBox="0 0 12 12"><rect width="12" height="12" fill="#6c6c6c"></rect><path d="M0 0h4v4H0zM8 0h4v4H8zM4 4h4v4H4zM0 8h4v4H0zM8 8h4v4H8z" fill="#8c8c8c"></path><rect x=".5" y=".5" width="11" height="11" fill="none" stroke="#8c8c8c"></rect></svg>
<svg style="left:1425px;top:397px" width="18" height="15" viewBox="0 0 18 15"><path d="M17 .5L8 9.500l1.500 1.500L17.500 2z" fill="#9a9a9a"></path><path d="M7.500 9.500c-2.500 0-2.500 3-6.500 3.500 3 1.500 7.500 1 8.500-2z" fill="#9a9a9a"></path></svg>
<svg style="left:1449px;top:398px" width="14" height="14" viewBox="0 0 14 14"><path d="M7 1.500v11M1.500 7h11" stroke="#a0a0a0" stroke-width="1.200"></path><path d="M7 0l2.500 3h-5zM7 14l2.500-3h-5zM0 7l3-2.500v5zM14 7l-3-2.500v5z" fill="none" stroke="#a0a0a0" stroke-width="1"></path></svg>
<svg style="left:1472px;top:398px" width="11" height="14" viewBox="0 0 11 14"><path d="M2.500 6V4a3 3 0 016 0v2" fill="none" stroke="#9a9a9a" stroke-width="1.600"></path><rect x=".5" y="6" width="10" height="7.500" rx=".8" fill="#9a9a9a"></rect><rect x="4.700" y="8" width="1.600" height="3" fill="#535353"></rect></svg>
<span class="t" style="top: 400px; font-size: 9px; color: rgb(205, 205, 205); transform: scaleX(1.0765); left: 1575px; transform-origin: 0px 50%;">Заливка:</span>
<div class="abs" style="left:1621px;top:395px;width:54px;height:20px;background:#4b4b4b;border:1px solid #454545;border-bottom-color:#5d5d5d"></div>
<div class="abs" style="left:1655px;top:396px;width:19px;height:18px;background:linear-gradient(#5d5d5d,#525252);border-left:1px solid #444"></div>
<span class="t" style="top: 400.5px; font-size: 9.5px; color: rgb(124, 124, 124); transform: scaleX(1.0283); left: 1626px; transform-origin: 0px 50%;">100%</span>
<svg style="left:1662px;top:404px" width="6" height="4" viewBox="0 0 6 4"><path d="M0 0h6L3 3.500z" fill="#b0b0b0"></path></svg>
<!-- layer list -->
<div class="abs" style="left:1339px;top:421px;width:340px;height:579px;background:#464646"></div>
<div class="abs" style="left:1664px;top:421px;width:15px;height:579px;background:linear-gradient(90deg,#3d3d3d,#434343)"></div>
<div class="abs" style="left:1339px;top:420px;width:340px;height:1px;background:#3d3d3d"></div>
<div class="abs" style="left:1339px;top:421px;width:31px;height:23px;background:#535353"></div>
<div class="abs" style="left:1369px;top:421px;width:1px;height:23px;background:#3f3f3f"></div>
<div class="abs" style="left:1370px;top:421px;width:294px;height:23px;background:#6c7c96"></div>
<div class="abs" style="left:1339px;top:444px;width:325px;height:1px;background:#3c3c3c"></div>
<svg style="left:1347px;top:427px" width="14" height="10" viewBox="0 0 14 10"><path d="M.5 5C3-.5 11-.5 13.500 5 11 10.500 3 10.500.5 5z" fill="#e4e4e4"></path><circle cx="7" cy="4.600" r="3" fill="#4a4a4a"></circle><circle cx="7" cy="4.600" r="1.400" fill="#e4e4e4"></circle></svg>
<div class="abs" style="left:1373px;top:424px;width:33px;height:16px;background:#fff;border:1px solid #111"></div>
<div class="abs" style="left:1377px;top:426px;width:6px;height:9px;background:linear-gradient(160deg,#5b3a86,#1c1438 45%,#a03a2a 70%,#2a1a3c);transform:skewX(-6deg)"></div>
<span class="t" style="top: 429px; font-size: 9.5px; font-style: italic; color: rgb(255, 255, 255); transform: scaleX(1.051); left: 1416px; transform-origin: 0px 50%;">Фон</span>
<svg style="left:1636px;top:425px" width="11" height="14" viewBox="0 0 11 14"><path d="M2.500 6V4a3 3 0 016 0v2" fill="none" stroke="#e4e4e4" stroke-width="1.400"></path><rect x="1" y="6.500" width="9" height="6.500" fill="none" stroke="#e4e4e4" stroke-width="1.400"></rect><rect x="4.800" y="8.500" width="1.400" height="2.500" fill="#e4e4e4"></rect></svg>
<!-- bottom bar -->
<div class="abs" style="left:1339px;top:1000px;width:340px;height:20px;background:#535353;border-top:1px solid #3a3a3a"></div>
<div class="abs" style="left:1339px;top:1001px;width:340px;height:1px;background:#5f5f5f"></div>
<svg style="left:1475px;top:1006.500px" width="16" height="9" viewBox="0 0 16 9"><rect x="1" y="1.200" width="8.500" height="6.600" rx="3.300" fill="none" stroke="#b8b8b8" stroke-width="1.700"></rect><rect x="6.500" y="1.200" width="8.500" height="6.600" rx="3.300" fill="none" stroke="#b8b8b8" stroke-width="1.700"></rect><path d="M5 4.500h6" stroke="#b8b8b8" stroke-width="1.700"></path></svg>
<span class="t" style="left:1505px;top:1002px;font-family:'Liberation Sans',sans-serif;font-size:13.500px;font-style:italic;font-weight:bold;color:#959595;letter-spacing:-.5px">fx</span>
<svg style="left:1518px;top:1014px" width="4" height="3" viewBox="0 0 4 3"><path d="M0 0h4L2 2.500z" fill="#6a6a6a"></path></svg>
<svg style="left:1530px;top:1005px" width="15" height="11" viewBox="0 0 15 12" preserveAspectRatio="none"><rect width="15" height="12" fill="#cfcfcf"></rect><circle cx="7.500" cy="6" r="2.700" fill="#4a4a4a"></circle></svg>
<svg style="left:1558px;top:1003.500px" width="13" height="13" viewBox="0 0 13 13"><circle cx="6.500" cy="6.500" r="5.600" fill="#d2d2d2"></circle><path d="M2.500 10.500a5.600 5.600 0 008-8z" fill="#535353"></path><circle cx="6.500" cy="6.500" r="5.400" fill="none" stroke="#d2d2d2" stroke-width="1.300"></circle></svg>
<svg style="left:1572px;top:1014px" width="4" height="3" viewBox="0 0 4 3"><path d="M0 0h4L2 2.500z" fill="#d0d0d0"></path></svg>
<svg style="left:1585px;top:1003px" width="13" height="12" viewBox="0 0 13 12"><path d="M0 1.500h5l1.500 1.500H13v9H0z" fill="#cfcfcf"></path></svg>
<svg style="left:1612px;top:1003px" width="12" height="12" viewBox="0 0 12 12"><path d="M2 1h9.500v10.500H6.500L2 7z" fill="#d2d2d2"></path><path d="M0 5.500h6.500V12z" fill="#535353"></path><path d="M1.500 6.500h4V11z" fill="#d2d2d2"></path></svg>
<svg style="left:1639px;top:1003px" width="12" height="13" viewBox="0 0 12 13"><path d="M0 3h12M4 2.500V1h4v1.500" fill="none" stroke="#8a8a8a" stroke-width="1.300"></path><path d="M1.500 4.500h9l-.8 8h-7.400z" fill="none" stroke="#8a8a8a" stroke-width="1.200"></path><path d="M4.300 5.500v6M6 5.500v6M7.700 5.500v6" stroke="#8a8a8a" stroke-width=".9"></path></svg>
<div class="abs" style="left:1679px;top:29px;width:1px;height:991px;background:#2b2b2b"></div>

<!--/DOCK-ITEMS-->
<!-- ================= DROPDOWN MENU ================= -->
<div id="menu" class="abs"></div>
<!--MENU-ITEMS-->
<span class="mt" style="top: 26px; color: rgb(0, 0, 0); transform: scaleX(0.9886); left: 104px; transform-origin: 0px 50%;">Отменить: Назначить профиль</span>
<span class="mt" style="top: 26px; color: rgb(0, 0, 0); transform: scaleX(1.0303); left: 379px; transform-origin: 0px 50%;">Ctrl+Z</span>
<span class="mt" style="top: 45px; color: rgb(109, 109, 109); transform: scaleX(0.969); left: 104px; transform-origin: 0px 50%;">Шаг вперед</span>
<span class="mt" style="top: 45px; color: rgb(109, 109, 109); transform: scaleX(1.0307); left: 347px; transform-origin: 0px 50%;">Shift+Ctrl+Z</span>
<span class="mt" style="top: 64px; color: rgb(0, 0, 0); transform: scaleX(0.9526); left: 104px; transform-origin: 0px 50%;">Шаг назад</span>
<span class="mt" style="top: 64px; color: rgb(0, 0, 0); transform: scaleX(1.0553); left: 356px; transform-origin: 0px 50%;">Alt+Ctrl+Z</span>
<div class="ms" style="top:86px"></div>
<span class="mt" style="top: 92px; color: rgb(109, 109, 109); transform: scaleX(0.9636); left: 104px; transform-origin: 0px 50%;">Ослабить...</span>
<span class="mt" style="top: 92px; color: rgb(109, 109, 109); transform: scaleX(1.0151); left: 348px; transform-origin: 0px 50%;">Shift+Ctrl+F</span>
<div class="ms" style="top:114px"></div>
<span class="mt" style="top: 120px; color: rgb(109, 109, 109); transform: scaleX(0.9555); left: 104px; transform-origin: 0px 50%;">Вырезать</span>
<span class="mt" style="top: 120px; color: rgb(109, 109, 109); transform: scaleX(1.0093); left: 379px; transform-origin: 0px 50%;">Ctrl+X</span>
<span class="mt" style="top: 139px; color: rgb(109, 109, 109); transform: scaleX(1.0058); left: 104px; transform-origin: 0px 50%;">Копировать</span>
<span class="mt" style="top: 139px; color: rgb(109, 109, 109); transform: scaleX(1.0191); left: 378px; transform-origin: 0px 50%;">Ctrl+C</span>
<span class="mt" style="top: 158px; color: rgb(109, 109, 109); transform: scaleX(0.9974); left: 104px; transform-origin: 0px 50%;">Скопировать совмещенные данные</span>
<span class="mt" style="top: 158px; color: rgb(109, 109, 109); transform: scaleX(1.0251); left: 346px; transform-origin: 0px 50%;">Shift+Ctrl+C</span>
<span class="mt" style="top: 177px; color: rgb(109, 109, 109); transform: scaleX(0.9435); left: 104px; transform-origin: 0px 50%;">Вставить</span>
<span class="mt" style="top: 177px; color: rgb(109, 109, 109); transform: scaleX(1.0093); left: 379px; transform-origin: 0px 50%;">Ctrl+V</span>
<span class="mt" style="top: 197px; color: rgb(109, 109, 109); transform: scaleX(0.9645); left: 104px; transform-origin: 0px 50%;">Специальная вставка</span>
<i class="arr" style="top:202px;border-left-color:#6d6d6d"></i>
<span class="mt" style="top: 215px; color: rgb(109, 109, 109); transform: scaleX(0.9952); left: 104px; transform-origin: 0px 50%;">Очистить</span>
<div class="ms" style="top:237px"></div>
<span class="mt" style="top: 243px; color: rgb(109, 109, 109); transform: scaleX(0.9929); left: 104px; transform-origin: 0px 50%;">Проверка орфографии...</span>
<span class="mt" style="top: 262px; color: rgb(109, 109, 109); transform: scaleX(0.9792); left: 104px; transform-origin: 0px 50%;">Поиск и замена текста...</span>
<div class="ms" style="top:284px"></div>
<span class="mt" style="top: 290px; color: rgb(0, 0, 0); transform: scaleX(0.9965); left: 104px; transform-origin: 0px 50%;">Выполнить заливку...</span>
<span class="mt" style="top: 290px; color: rgb(0, 0, 0); transform: scaleX(0.9771); left: 369px; transform-origin: 0px 50%;">Shift+F5</span>
<span class="mt" style="top: 309px; color: rgb(109, 109, 109); transform: scaleX(1.0055); left: 104px; transform-origin: 0px 50%;">Выполнить обводку...</span>
<div class="ms" style="top:331px"></div>
<span class="mt" style="top: 337px; color: rgb(109, 109, 109); transform: scaleX(1.0195); left: 104px; transform-origin: 0px 50%;">Масштаб с учетом содержимого</span>
<span class="mt" style="top: 337px; color: rgb(109, 109, 109); transform: scaleX(1.042); left: 323px; transform-origin: 0px 50%;">Alt+Shift+Ctrl+C</span>
<span class="mt" style="top: 356px; color: rgb(109, 109, 109); transform: scaleX(0.995); left: 104px; transform-origin: 0px 50%;">Марионеточная деформация</span>
<span class="mt" style="top: 375px; color: rgb(109, 109, 109); transform: scaleX(0.9935); left: 104px; transform-origin: 0px 50%;">Деформация перспективы</span>
<span class="mt" style="top: 394px; color: rgb(109, 109, 109); transform: scaleX(0.994); left: 104px; transform-origin: 0px 50%;">Свободное трансформирование</span>
<span class="mt" style="top: 394px; color: rgb(109, 109, 109); transform: scaleX(1.0303); left: 379px; transform-origin: 0px 50%;">Ctrl+T</span>
<span class="mt" style="top: 414px; color: rgb(109, 109, 109); transform: scaleX(1.0079); left: 104px; transform-origin: 0px 50%;">Трансформирование</span>
<i class="arr" style="top:419px;border-left-color:#6d6d6d"></i>
<span class="mt" style="top: 432px; color: rgb(109, 109, 109); transform: scaleX(0.9923); left: 104px; transform-origin: 0px 50%;">Автоматически выравнивать слои...</span>
<span class="mt" style="top: 451px; color: rgb(109, 109, 109); transform: scaleX(0.9848); left: 104px; transform-origin: 0px 50%;">Автоналожение слоев...</span>
<div class="ms" style="top:473px"></div>
<span class="mt" style="top: 479px; color: rgb(0, 0, 0); transform: scaleX(0.9757); left: 104px; transform-origin: 0px 50%;">Определить кисть...</span>
<span class="mt" style="top: 498px; color: rgb(0, 0, 0); transform: scaleX(0.9744); left: 104px; transform-origin: 0px 50%;">Определить узор...</span>
<span class="mt" style="top: 517px; color: rgb(109, 109, 109); transform: scaleX(1.0046); left: 104px; transform-origin: 0px 50%;">Определить произвольную фигуру...</span>
<div class="ms" style="top:539px"></div>
<span class="mt" style="top: 546px; color: rgb(0, 0, 0); transform: scaleX(0.9684); left: 104px; transform-origin: 0px 50%;">Удалить из памяти</span>
<i class="arr" style="top:551px;border-left-color:#000"></i>
<div class="ms" style="top:567px"></div>
<span class="mt" style="top: 573px; color: rgb(0, 0, 0); transform: scaleX(0.9849); left: 104px; transform-origin: 0px 50%;">Наборы параметров Adobe PDF...</span>
<span class="mt" style="top: 593px; color: rgb(0, 0, 0); transform: scaleX(1.0184); left: 104px; transform-origin: 0px 50%;">Наборы</span>
<i class="arr" style="top:598px;border-left-color:#000"></i>
<span class="mt" style="top: 611px; color: rgb(0, 0, 0); transform: scaleX(0.9719); left: 104px; transform-origin: 0px 50%;">Удаленные соединения...</span>
<div class="ms" style="top:633px"></div>
<span class="mt" style="top: 639px; color: rgb(0, 0, 0); transform: scaleX(0.9799); left: 104px; transform-origin: 0px 50%;">Настройка цветов...</span>
<span class="mt" style="top: 639px; color: rgb(0, 0, 0); transform: scaleX(1.02); left: 347px; transform-origin: 0px 50%;">Shift+Ctrl+K</span>
<div class="abs" style="left:87px;top:658px;width:343px;height:19px;background:#3399ff"></div>
<span class="mt" style="top: 658px; color: rgb(255, 255, 255); transform: scaleX(0.9879); left: 104px; transform-origin: 0px 50%;">Назначить профиль...</span>
<span class="mt" style="top: 677px; color: rgb(0, 0, 0); transform: scaleX(0.9816); left: 104px; transform-origin: 0px 50%;">Преобразовать в профиль...</span>
<div class="ms" style="top:699px"></div>
<span class="mt" style="top: 705px; color: rgb(0, 0, 0); transform: scaleX(0.9923); left: 104px; transform-origin: 0px 50%;">Клавиатурные сокращения...</span>
<span class="mt" style="top: 705px; color: rgb(0, 0, 0); transform: scaleX(1.0383); left: 324px; transform-origin: 0px 50%;">Alt+Shift+Ctrl+K</span>
<span class="mt" style="top: 724px; color: rgb(0, 0, 0); transform: scaleX(1.0133); left: 104px; transform-origin: 0px 50%;">Меню...</span>
<span class="mt" style="top: 724px; color: rgb(0, 0, 0); transform: scaleX(1.0604); left: 320px; transform-origin: 0px 50%;">Alt+Shift+Ctrl+M</span>
<span class="mt" style="top: 744px; color: rgb(0, 0, 0); transform: scaleX(1.0196); left: 104px; transform-origin: 0px 50%;">Настройки</span>
<i class="arr" style="top:749px;border-left-color:#000"></i>
<span class="mt" style="top: 763px; color: rgb(0, 0, 0); transform: scaleX(1.0014); left: 104px; transform-origin: 0px 50%;">Синхронизировать настройки</span>
<i class="arr" style="top:768px;border-left-color:#000"></i>

<!--/MENU-ITEMS-->
<!-- ================= DIALOG ================= -->
<div id="dlg" class="abs"></div>
<div id="dlgc" class="abs"></div>
<!--DLG-ITEMS-->
<span class="t" style="top: 410px; font-size: 15px; color: rgb(51, 51, 51); transform: scaleX(0.9905); left: 804px; transform-origin: 0px 50%;">Назначить профиль</span>
<div class="abs" style="left:1126px;top:403px;width:31px;height:20px;background:#c75050"></div>
<svg style="left:1137px;top:409px" width="9" height="9" viewBox="0 0 9 9"><path d="M.8 .8l7.400 7.400M8.200 .8L.8 8.200" stroke="#fff" stroke-width="1.700"></path></svg>

<!-- group box -->
<div class="abs" style="left:600px;top:451px;width:409px;height:93px;border:1px solid #a9a9a9;box-shadow:inset 1px 1px 0 #fff,1px 1px 0 #fff"></div>
<div class="abs" style="left:616px;top:444px;width:131px;height:14px;background:#f0f0f0"></div>
<span class="dt" style="top: 444px; transform: scaleX(1.0145); left: 622px; transform-origin: 0px 50%;">Назначить профиль:</span>
<div class="radio" style="left:610px;top:467px"></div>
<span class="dt" style="top: 467px; transform: scaleX(0.9977); left: 626.5px; transform-origin: 0px 50%;">Отменить управление цветом в документе</span>
<div class="radio" style="left:610px;top:490px"></div>
<span class="dt" style="top: 490px; transform: scaleX(1.0077); left: 626.5px; transform-origin: 0px 50%;">Рабочее пространство RGB:&nbsp; sRGB IEC61966-2.1</span>
<div class="abs" style="left:606px;top:512px;width:394px;height:20px;background:#f0f0f0"></div>
<div class="radio" style="left:610px;top:515px"></div>
<div class="abs" style="left:613px;top:518px;width:7px;height:7px;border-radius:50%;background:#1a1a1a"></div>
<span class="dt" style="top: 515px; transform: scaleX(1.014); left: 626.5px; transform-origin: 0px 50%;">Профиль:</span>
<div class="abs" style="left:694px;top:512px;width:306px;height:21px;background:#fff;border:1px solid #ababab"></div>
<span class="dt" style="top: 516px; transform: scaleX(0.9883); left: 701px; transform-origin: 0px 50%;">sRGB display profile with display hardware config...</span>
<svg style="left:985px;top:519px" width="10" height="7" viewBox="0 0 10 7"><path d="M1 1l4 4.300L9 1" fill="none" stroke="#444" stroke-width="1.700"></path></svg>
<!-- buttons -->
<div class="btn" style="top:450px;border-color:#3399ff;box-shadow:inset 0 0 0 1px #bcdcfb"></div>
<span class="dt" style="top: 453px; transform: scaleX(1.0271); left: 1077px; transform-origin: 0px 50%;">OK</span>
<div class="btn" style="top:478px"></div>
<span class="dt" style="top: 481px; transform: scaleX(0.9942); left: 1063px; transform-origin: 0px 50%;">Отмена</span>
<div class="abs" style="left:1024px;top:512px;width:13px;height:13px;background:#fff;border:1px solid #707070"></div>
<svg style="left:1026px;top:514px" width="9" height="9" viewBox="0 0 9 9"><path d="M.8 4.500L3.300 7.500 8.300 .8" fill="none" stroke="#000" stroke-width="1.800"></path></svg>
<span class="dt" style="top: 512px; transform: scaleX(1.0107); left: 1040px; transform-origin: 0px 50%;">Просмотр</span>
<!--/DLG-ITEMS-->
<!-- ================= ANNOTATIONS ================= -->
<!--ANNOT-->
<svg style="left:0;top:0" width="1680" height="1020" viewBox="0 0 1680 1020">
<g fill="none" stroke="#ed1c24" stroke-width="2">
<rect x="82.500" y="2" width="112.500" height="26"></rect>
<rect x="77.500" y="656" width="354.700" height="20.700"></rect>
<rect x="580" y="400.500" width="585.500" height="164"></rect>
<rect x="605.200" y="511.500" width="395" height="21"></rect>
<path d="M339 73.300L206 30.500"></path>
<path d="M382.500 573.400L254 651"></path>
<path d="M433.300 655.700L596 542"></path>
</g>
<g fill="#ed1c24">
<path d="M195.400 28.600L210.700 25.400 205 37z"></path>
<path d="M244.200 656.800L252.300 643.500 260 655.500z"></path>
<path d="M605.900 535.200L590.200 538 597.200 549z"></path>
</g>
<g fill="#ed1c24" font-weight="700" font-style="italic">
<text x="270.500" y="50.500" font-family="DejaVu Serif,serif" font-size="16" transform="rotate(14 276 45)">1</text>
<text x="310.500" y="610" font-family="DejaVu Sans,sans-serif" font-size="16" transform="rotate(-24 316 605)">2</text>
<text x="504.500" y="597.500" font-family="DejaVu Sans,sans-serif" font-size="16" transform="rotate(-26 510 592)">3</text>
</g>
</svg>
<!--/ANNOT-->
<!-- watermark -->
<span class="t" style="left:839.500px;top:509px;font-size:32px;color:rgba(110,110,110,.13);transform:translate(-50%,-50%) rotate(-28.500deg);transform-origin:50% 50%">users-pc.ru</span>


</body></html>
